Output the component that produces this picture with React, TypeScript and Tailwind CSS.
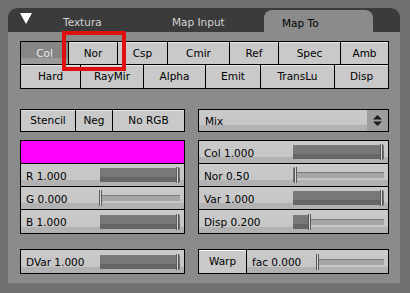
import React from 'react';

interface Btn {
  label: string;
  w: string;
  pressed?: boolean;
}

interface SliderProps {
  label: string;
  value: number;
  track: string;
  last?: boolean;
}

const row1: Btn[] = [
  { label: 'Col', w: 'w-[47px]', pressed: true },
  { label: 'Nor', w: 'w-[49px]' },
  { label: 'Csp', w: 'w-[50px]' },
  { label: 'Cmir', w: 'w-[62px]' },
  { label: 'Ref', w: 'w-[49px]' },
  { label: 'Spec', w: 'w-[62px]' },
  { label: 'Amb', w: 'flex-1' },
];

const row2: Btn[] = [
  { label: 'Hard', w: 'w-[59px]' },
  { label: 'RayMir', w: 'w-[63px]' },
  { label: 'Alpha', w: 'w-[62px]' },
  { label: 'Emit', w: 'w-[55px]' },
  { label: 'TransLu', w: 'w-[74px]' },
  { label: 'Disp', w: 'flex-1' },
];

const btnBase = 'flex items-center justify-center';
const light = 'bg-[#c9c9c9] text-black shadow-[inset_0_1px_0_#e6e6e6]';
const sliderBg = 'bg-[linear-gradient(#cacaca_0%,#c6c6c6_72%,#b2b2b2_72%,#b2b2b2_100%)]';

function ButtonRow({ items, h }: { items: Btn[]; h: string }) {
  return (
    <div className={`flex ${h}`}>
      {items.map((b, i) => (
        <div
          key={b.label}
          className={`${btnBase} ${b.w} ${i > 0 ? 'border-l border-black' : ''} ${
            b.pressed ? 'bg-[linear-gradient(#868686_0%,#868686_75%,#9a9a9a_75%)] text-[#ececec]' : light
          }`}
        >
          {b.label}
        </div>
      ))}
    </div>
  );
}

function Slider({ label, value, track, last }: SliderProps) {
  const pct = Math.max(0, Math.min(1, value)) * 100;
  return (
    <div className={`flex items-center h-[23px] ${sliderBg} ${last ? '' : 'border-b border-black'}`}>
      <span className="flex-1 pl-[5px] pt-[2px] text-black">{label}</span>
      <div className={`relative h-[14px] ${track} mr-[4px]`}>
        <div className="absolute inset-x-0 top-[4px] h-[7px] bg-[#a6a6a6] border-t border-[#7a7a7a] border-b border-b-[#c4c4c4]" />
        <div
          className="absolute left-0 top-0 h-full bg-[linear-gradient(#7a7a7a_0%,#777777_65%,#666666_65%)]"
          style={{ width: `${pct}%` }}
        />
        <div
          className="absolute top-[-1px] h-[16px] w-[3px] bg-[#d6d6d6] border-x border-[#5a5a5a]"
          style={{ left: `calc(${pct}% - ${pct > 50 ? 4 : 1}px)` }}
        />
      </div>
    </div>
  );
}

export default function App() {
  return (
    <div className="relative w-[410px] h-[293px] bg-[#717171] pt-[8px] pl-[8px] font-['DejaVu_Sans',sans-serif] text-[10.5px] leading-none select-none">
      <div className="w-[392px] h-[275px] bg-[#8b8b8b] rounded-t-[9px] flex flex-col">
        {/* header tabs */}
        <div className="h-[24px] bg-[#3b3b3b] rounded-t-[9px] flex items-end">
          <svg width="12" height="11" viewBox="0 0 12 11" className="ml-[12px] mb-[8px]">
            <polygon points="0,0 12,0 6,11" fill="#ffffff" />
          </svg>
          <span className="ml-[31px] w-[109px] pb-[5px] text-[#d4d4d4]">Textura</span>
          <span className="w-[92px] pb-[5px] text-[#d4d4d4]">Map Input</span>
          <div className="w-[109px] h-[22px] bg-[#8b8b8b] rounded-t-[8px] pl-[18px] pt-[8px] text-black">
            Map To
          </div>
        </div>

        {/* body */}
        <div className="flex-1 pt-[9px] pl-[12px] pr-[11px] pb-[9px] flex flex-col">
          <div className="border border-black">
            <ButtonRow items={row1} h="h-[22px]" />
            <div className="border-t border-black">
              <ButtonRow items={row2} h="h-[23px]" />
            </div>
          </div>

          <div className="mt-[20px] flex gap-[13px]">
            <div className="w-[165px] h-[23px] flex border border-black">
              <div className={`${btnBase} ${light} w-[54px]`}>Stencil</div>
              <div className={`${btnBase} ${light} w-[37px] border-l border-black`}>Neg</div>
              <div className={`${btnBase} ${light} flex-1 border-l border-black`}>No RGB</div>
            </div>
            <div className="flex-1 h-[23px] flex border border-black">
              <div className={`flex-1 flex items-center pl-[6px] pt-[2px] ${sliderBg}`}>Mix</div>
              <div className="w-[21px] bg-[#9e9e9e] flex items-center justify-center">
                <svg width="9" height="11" viewBox="0 0 9 11">
                  <polygon points="4.5,0 9,4.5 0,4.5" fill="#1a1a1a" />
                  <polygon points="0,6.5 9,6.5 4.5,11" fill="#1a1a1a" />
                </svg>
              </div>
            </div>
          </div>

          <div className="mt-[8px] flex gap-[13px]">
            <div className="w-[165px] flex flex-col border border-black">
              <div className="h-[23px] bg-[#ff00ff] border-b border-black" />
              <Slider label="R 1.000" value={1} track="w-[80px]" />
              <Slider label="G 0.000" value={0} track="w-[80px]" />
              <Slider label="B 1.000" value={1} track="w-[80px]" last />
            </div>
            <div className="flex-1 flex flex-col border border-black">
              <Slider label="Col 1.000" value={1} track="w-[91px]" />
              <Slider label="Nor 0.50" value={0.02} track="w-[91px]" />
              <Slider label="Var 1.000" value={1} track="w-[91px]" />
              <Slider label="Disp 0.200" value={0.18} track="w-[91px]" last />
            </div>
          </div>

          <div className="mt-[15px] flex gap-[13px]">
            <div className="w-[165px] border border-black">
              <Slider label="DVar 1.000" value={1} track="w-[80px]" last />
            </div>
            <div className="flex-1 flex border border-black">
              <div className={`${btnBase} bg-[#c9c9c9] w-[48px] border-r border-black shadow-[inset_0_1px_0_#ffffff]`}>Warp</div>
              <div className="flex-1">
                <Slider label="fac 0.000" value={0} track="w-[67px]" last />
              </div>
            </div>
          </div>
        </div>
      </div>

      {/* red highlight box */}
      <div className="absolute left-[62px] top-[31px] w-[64px] h-[40px] border-[4px] border-[#e01010]" />
    </div>
  );
}
